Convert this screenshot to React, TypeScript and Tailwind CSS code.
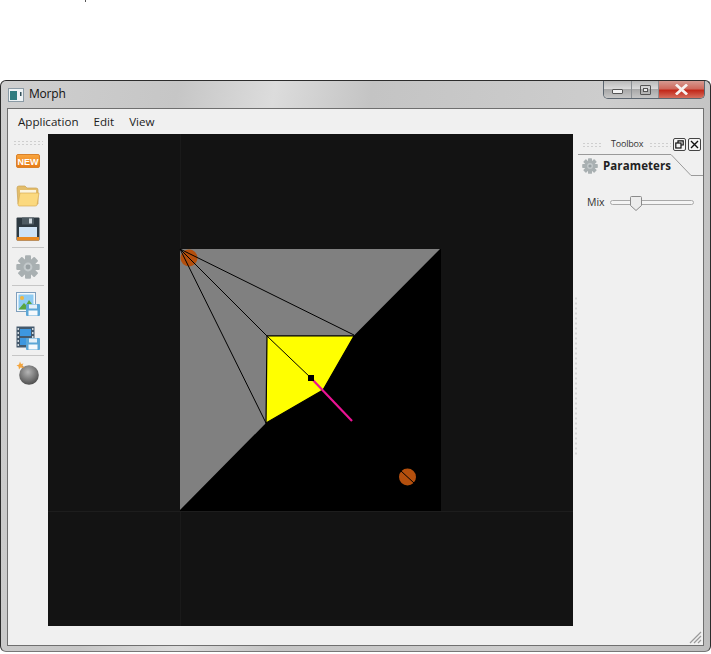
import React from "react";

const Gear = ({ size = 24, color = "#a9b0b2" }: { size?: number; color?: string }) => {
  const teeth = [0, 45, 90, 135];
  return (
    <svg width={size} height={size} viewBox="0 0 24 24">
      {teeth.map((a) => (
        <rect key={a} x="9" y="0.3" width="6" height="23.4" rx="1" fill={color} transform={`rotate(${a} 12 12)`} />
      ))}
      <circle cx="12" cy="12" r="8" fill={color} />
      <circle cx="12" cy="12" r="4.4" fill="#c3c9cb" />
      <circle cx="12" cy="12" r="2.4" fill="#98a0a3" />
    </svg>
  );
};

const Floppy = () => (
  <svg x="0" y="0" width="14" height="12" viewBox="0 0 14 12">
    <rect width="14" height="12" rx="1" fill="#5ba6d6" />
    <rect x="3" y="0.5" width="8" height="4" fill="#e4f0f8" />
    <rect x="2.5" y="6.5" width="9" height="5" fill="#f5f9fc" />
  </svg>
);

const handleDots = "bg-[radial-gradient(circle,#cfcfcf_0.8px,transparent_1px)] bg-[length:4px_3px]";

function ToolBar() {
  return (
    <div className="w-10 shrink-0 flex flex-col items-center">
      <div className="h-[18px] w-full flex items-center justify-center">
        <div className={`w-[30px] h-[6px] ${handleDots}`} />
      </div>
      <div className="h-[18px] flex items-center justify-center">
        <svg width="24" height="14" viewBox="0 0 24 14">
          <defs>
            <linearGradient id="nw" x1="0" y1="0" x2="0" y2="1">
              <stop offset="0" stopColor="#f9a63f" />
              <stop offset="1" stopColor="#e77a16" />
            </linearGradient>
          </defs>
          <rect x="0.5" y="0.5" width="23" height="13" rx="1.5" fill="url(#nw)" stroke="#d9812a" />
          <text x="12" y="10.5" textAnchor="middle" fontSize="9" fontWeight="800" fill="#fff" fontFamily="'Liberation Sans',sans-serif">NEW</text>
        </svg>
      </div>
      <div className="h-[35px] mt-[8px] flex items-center justify-center">
        <svg width="24" height="22" viewBox="0 0 24 22">
          <path d="M1 3 Q1 1 3 1 H9 L11 3 H20 Q22 3 22 5 V19 H2 Z" fill="#e3bd6b" stroke="#c9a253" strokeWidth="0.7" />
          <path d="M4 5 H20 V9 H4Z" fill="#fbf4df" />
          <path d="M4 8 H23 L21 20 Q21 21 19 21 H3 Q2 21 2 19 Z" fill="#fbd97f" stroke="#d8ad57" strokeWidth="0.7" />
        </svg>
      </div>
      <div className="h-[32px] flex items-center justify-center">
        <svg width="24" height="24" viewBox="0 0 24 24">
          <rect x="0.5" y="0.5" width="23" height="23" rx="1" fill="#2e3a42" />
          <rect x="6" y="0.5" width="12" height="7" fill="#4e5b63" />
          <rect x="13" y="1.5" width="3" height="5" fill="#cfd8de" />
          <rect x="3" y="10" width="18" height="10" fill="#cfe3f5" />
          <rect x="1" y="20" width="22" height="3.5" fill="#e98a22" />
        </svg>
      </div>
      <div className="w-[32px] h-px bg-[#c6c6c6] mt-[2px]" />
      <div className="h-[37px] flex items-center justify-center"><Gear /></div>
      <div className="w-[32px] h-px bg-[#c6c6c6]" />
      <div className="h-[36px] flex items-center justify-center">
        <svg width="24" height="24" viewBox="0 0 24 24">
          <rect x="0.5" y="0.5" width="19" height="19" fill="#f4f8fb" stroke="#7f9fbd" />
          <rect x="2.5" y="2.5" width="15" height="15" fill="#8ecbf2" />
          <circle cx="6" cy="6" r="2" fill="#f3b63c" />
          <path d="M2.5 17.5 L8 11 L10 13 L13 8 L17.5 14 V17.5Z" fill="#5aa63f" />
          <svg x="10" y="12" width="14" height="12" viewBox="0 0 14 12"><Floppy /></svg>
        </svg>
      </div>
      <div className="h-[31px] flex items-center justify-center">
        <svg width="24" height="24" viewBox="0 0 24 24">
          <rect x="0.5" y="0.5" width="18" height="21" fill="#44596c" />
          <rect x="4" y="3" width="11" height="7" fill="#3d97e0" />
          <rect x="4" y="12" width="11" height="7" fill="#3d97e0" />
          {[2, 6, 10, 14, 18].map((y) => (
            <g key={y}>
              <rect x="1.5" y={y} width="1.5" height="2" fill="#cfd8de" />
              <rect x="16" y={y} width="1.5" height="2" fill="#cfd8de" />
            </g>
          ))}
          <svg x="10" y="12" width="14" height="12" viewBox="0 0 14 12"><Floppy /></svg>
        </svg>
      </div>
      <div className="w-[32px] h-px bg-[#c6c6c6] mt-[2px]" />
      <div className="h-[34px] flex items-center justify-center">
        <svg width="24" height="24" viewBox="0 0 24 24">
          <defs>
            <radialGradient id="bm" cx="0.45" cy="0.35" r="0.75">
              <stop offset="0" stopColor="#b5b5b5" />
              <stop offset="0.6" stopColor="#6f6f6f" />
              <stop offset="1" stopColor="#3d3d3d" />
            </radialGradient>
          </defs>
          <circle cx="13" cy="14" r="9.8" fill="url(#bm)" />
          <path d="M8 7 L5 4" stroke="#b98a58" strokeWidth="1.5" />
          <path d="M4 0.5 L5 3 L7.5 2.5 L6 5 L7.5 7 L4.5 6.5 L3 8.5 L2.5 5.5 L0.5 4.5 L3 3.5Z" fill="#f4a53d" />
        </svg>
      </div>
    </div>
  );
}

function Canvas() {
  return (
    <div className="flex-1 bg-[#131313] self-stretch mb-[19px] min-w-0">
      <svg className="block w-full h-full" viewBox="48 134 525 492">
        <defs>
          <filter id="soft" x="-30%" y="-30%" width="160%" height="160%">
            <feGaussianBlur stdDeviation="0.4" />
          </filter>
        </defs>
        <path d="M180.5 134 V626" stroke="#1a1a1a" strokeWidth="1" />
        <path d="M48 511.5 H573" stroke="#1d1d1d" strokeWidth="1" />
        <rect x="180" y="249" width="261" height="262" fill="#000" />
        <polygon points="180,249 440,249 354,335.5 267,335.5 266,423 180,510" fill="#808080" />
        <polygon points="267,336 354,336 323,390 266,423" fill="#ffff00" />
        <circle cx="189" cy="258" r="8.5" fill="#b4500f" filter="url(#soft)" />
        <g stroke="#000" strokeWidth="1" fill="none">
          <path d="M180 249 L354 335" />
          <path d="M180 249 L267 336 L311 378" />
          <path d="M180 249 L266 423" />
          <path d="M267 336 H354 L323 390 L266 423 Z" strokeWidth="1.2" />
        </g>
        <path d="M311 378 L352 421" stroke="#ea1393" strokeWidth="2.2" />
        <rect x="308" y="375" width="6" height="6" fill="#000" />
        <circle cx="407.5" cy="477" r="8.5" fill="#b4500f" filter="url(#soft)" />
        <path d="M401 471 L414 483" stroke="#000" strokeWidth="1" />
      </svg>
    </div>
  );
}

function ToolBox() {
  return (
    <div className="w-[130px] shrink-0 flex flex-col relative">
      <div className="absolute left-[1px] top-[162px] w-[4px] h-[160px] bg-[radial-gradient(circle,#d6d6d6_1px,transparent_1.2px)] bg-[length:4px_5px]" />
      <div className="h-[20px] flex items-center pl-[9px] pr-[2px]">
        <div className={`w-[21px] h-[5px] ${handleDots}`} />
        <span className="ml-[8px] w-[32px] text-[9px] text-[#333] tracking-[-0.2px] whitespace-nowrap">Toolbox</span>
        <div className={`ml-[6px] w-[22px] h-[5px] ${handleDots}`} />
        <div className="ml-auto flex gap-[2px]">
          <div className="w-[13px] h-[13px] border border-[#444] rounded-[2px] bg-[#f4f4f4] flex items-center justify-center">
            <svg width="9" height="9" viewBox="0 0 9 9" fill="none" stroke="#111" strokeWidth="1.2">
              <path d="M3 3 V0.8 H8.2 V5 H6" />
              <rect x="0.8" y="3" width="5.2" height="5" />
            </svg>
          </div>
          <div className="w-[13px] h-[13px] border border-[#444] rounded-[2px] bg-[#f4f4f4] flex items-center justify-center">
            <svg width="9" height="9" viewBox="0 0 9 9" stroke="#111" strokeWidth="1.4">
              <path d="M1 1 L8 8 M8 1 L1 8" />
            </svg>
          </div>
        </div>
      </div>
      <div className="relative h-[22px]">
        <svg className="absolute left-0 top-0" width="130" height="23" viewBox="0 0 130 23" fill="none">
          <path d="M5 0.5 H98 L118 21.5 H130" stroke="#9a9a9a" />
        </svg>
        <div className="relative flex items-center h-[24px] pl-[9px] gap-[5px]">
          <Gear size={16} />
          <span className="text-[11.5px] font-bold text-[#222] tracking-[0.1px] whitespace-nowrap">Parameters</span>
        </div>
      </div>
      <div className="flex items-center mt-[19px] pl-[14px]">
        <span className="text-[10.5px] text-[#333] w-[23px]">Mix</span>
        <div className="relative w-[84px] h-[14px] flex items-center">
          <div className="w-full h-[5px] rounded-full border border-[#a9a9a9] bg-[#f4f4f4]" />
          <svg className="absolute left-[20px] top-0" width="12" height="15" viewBox="0 0 12 15">
            <path d="M1.5 0.5 H10.5 Q11.5 0.5 11.5 1.5 V9.5 L6 14.5 L0.5 9.5 V1.5 Q0.5 0.5 1.5 0.5Z" fill="#ececec" stroke="#8a8a8a" />
          </svg>
        </div>
      </div>
    </div>
  );
}

export default function App() {
  return (
    <div className="w-[711px] h-[654px] bg-white overflow-hidden relative font-['Open_Sans','Noto_Sans',sans-serif]">
      <div className="absolute left-[85px] top-0 w-px h-[2px] bg-[#555]" />
      <div className="h-[80px]" />
      <div className="h-[572px] rounded-[6px] border border-[#2c2c2c] border-b-[#777] bg-[linear-gradient(100deg,#cfcfcf_0%,#c6c6c6_22%,#dcdcdc_34%,#c4c4c4_46%,#cdcdcd_75%,#bdbdbd_100%)] px-[6px] pb-[5px] flex flex-col relative">
        <div className="h-[27px] flex items-center shrink-0">
          <svg width="16" height="14" viewBox="0 0 16 14" className="ml-[1px]">
            <rect x="0.5" y="0.5" width="15" height="13" fill="#eef3f5" stroke="#8a9aa5" />
            <rect x="2" y="3" width="7" height="9" fill="#2f7d80" />
            <rect x="12" y="4" width="1.5" height="4" fill="#33505a" />
          </svg>
          <span className="ml-[5px] -mt-[2px] text-[12px] tracking-[-0.2px] text-[#111] leading-none">Morph</span>
          <div className="ml-auto -mt-[9px] -mr-[1px] flex h-[18px] w-[102px] rounded-b-[5px] border border-t-0 border-[#5c6670] overflow-hidden">
            <div className="w-[28px] border-r border-[#8b8f93] bg-[linear-gradient(#b9b9b9,#dadada_45%,#a8a8a8_50%,#c6c6c6)] flex items-center justify-center">
              <div className="w-[11px] h-[5px] mt-[3px] rounded-[1px] border border-[#555] bg-[#f3f3f3]" />
            </div>
            <div className="w-[27px] border-r border-[#8b8f93] bg-[linear-gradient(#b9b9b9,#dadada_45%,#a8a8a8_50%,#c6c6c6)] flex items-center justify-center">
              <div className="w-[11px] h-[10px] rounded-[1px] border border-[#555] flex items-center justify-center">
                <div className="w-[5px] h-[4px] border border-[#555] bg-[#eee]" />
              </div>
            </div>
            <div className="flex-1 bg-[linear-gradient(#d69a91,#cf6a5d_45%,#c2281a_55%,#d56f5e)] flex items-center justify-center">
              <svg width="13" height="11" viewBox="0 0 13 11">
                <path d="M2 1.5 L11 9.5 M11 1.5 L2 9.5" stroke="#f7f2f0" strokeWidth="2.8" strokeLinecap="square" />
              </svg>
            </div>
          </div>
        </div>
        <div className="flex-1 min-h-0 bg-[#f0f0f0] border border-[#6f6f6f] flex flex-col relative">
          <div className="h-[25px] shrink-0 flex items-center pl-[10px] gap-[15px] text-[11.6px] text-[#1c1c1c]">
            <span>Application</span>
            <span>Edit</span>
            <span>View</span>
          </div>
          <div className="flex-1 min-h-0 flex">
            <ToolBar />
            <Canvas />
            <ToolBox />
          </div>
          <svg className="absolute right-[1px] bottom-[1px]" width="13" height="13" viewBox="0 0 13 13" stroke="#9a9a9a" strokeWidth="1.2">
            <path d="M1 12 L12 1 M5 12 L12 5 M9 12 L12 9" />
          </svg>
        </div>
      </div>
    </div>
  );
}
